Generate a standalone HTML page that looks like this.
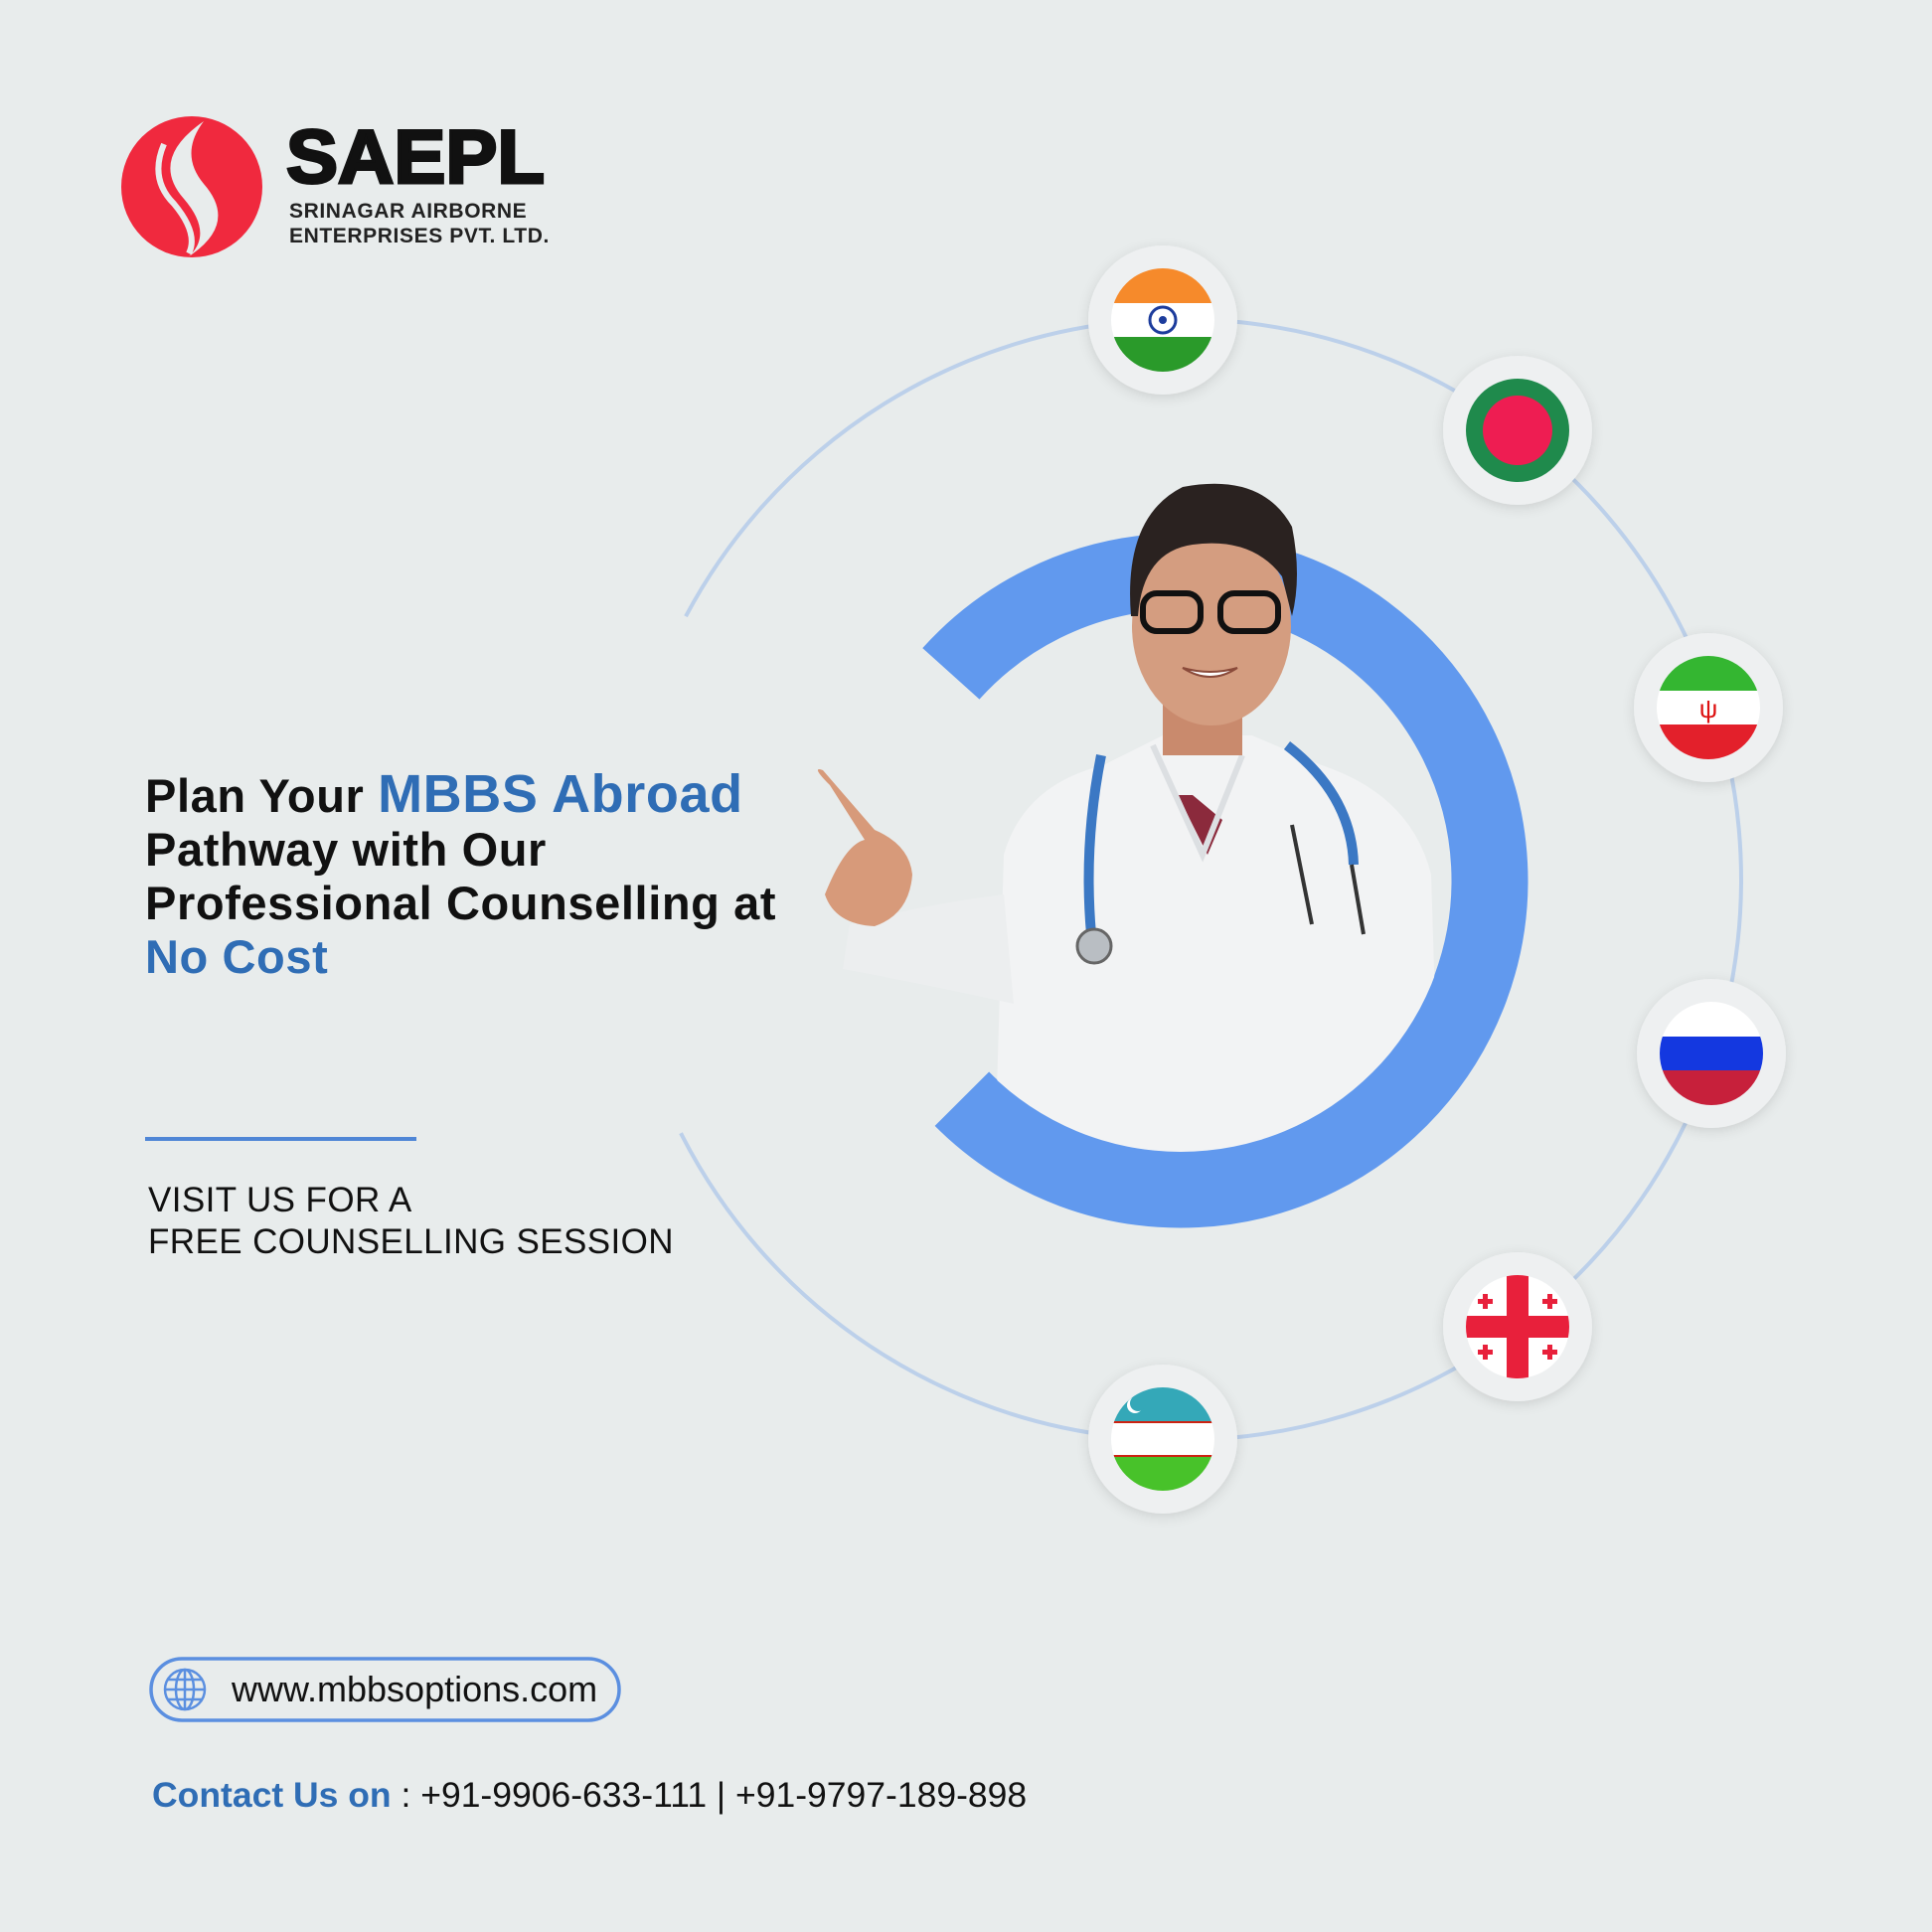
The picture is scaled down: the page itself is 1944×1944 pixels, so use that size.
<!DOCTYPE html>
<html><head><meta charset="utf-8"><style>
html,body{margin:0;padding:0}
body{width:1944px;height:1944px;overflow:hidden;background:#e8ecec;position:relative;font-family:"Liberation Sans",sans-serif}
.abs{position:absolute}
.h{left:146px;top:772px;font-size:47px;font-weight:bold;line-height:54px;color:#111;letter-spacing:0.6px}
.b{color:#2f6db5}
</style></head><body>
<svg class="abs" style="left:0;top:0" width="1944" height="1944" viewBox="0 0 1944 1944">
<defs>
<filter id="sh" x="-30%" y="-30%" width="160%" height="160%"><feDropShadow dx="0" dy="3" stdDeviation="6" flood-color="#000" flood-opacity="0.12"/></filter>
<clipPath id="body"><circle cx="1188" cy="886" r="273"/><rect x="1000" y="400" width="400" height="500"/></clipPath>
<clipPath id="f"><circle r="52"/></clipPath>
</defs>
<!-- thin orbit -->
<circle cx="1188" cy="885" r="564" fill="none" stroke="#bcd0ea" stroke-width="4" stroke-dasharray="3003 541" transform="rotate(-152 1188 885)"/>
<!-- big ring -->
<circle cx="1188" cy="886" r="311" fill="none" stroke="#6199ee" stroke-width="77" stroke-dasharray="1482 472" transform="rotate(-138 1188 886)"/>
<!-- person body -->
<g clip-path="url(#body)">
<path d="M1000 1200 L1010 860 Q1030 790 1110 770 L1170 740 L1260 740 L1330 770 Q1420 800 1440 880 L1450 1200 Z" fill="#f2f3f4"/>
<path d="M1185 800 L1200 800 L1230 825 L1215 860 Z" fill="#8b2a3c"/>
<path d="M1160 750 L1210 860 L1250 760" fill="none" stroke="#dcdfe2" stroke-width="6"/>
<path d="M1108 760 Q1090 850 1098 940 M1295 750 Q1360 800 1362 870" fill="none" stroke="#3b78c4" stroke-width="10"/>
<circle cx="1101" cy="952" r="17" fill="#b9bec3" stroke="#666" stroke-width="3"/>
<path d="M1300 830 L1320 930" stroke="#333" stroke-width="4"/>
<path d="M1360 870 L1372 940" stroke="#333" stroke-width="4"/>
</g>
<!-- arm -->
<path d="M1010 900 Q930 910 855 930 L848 975 Q930 990 1020 1010 Z" fill="#eceeef"/>
<path d="M830 900 Q850 850 870 845 L835 790 Q815 770 828 775 L880 835 Q915 850 918 880 Q915 920 880 932 Q840 930 830 900 Z" fill="#d79a7a"/>
<!-- head -->
<rect x="1170" y="690" width="80" height="70" fill="#c98a6d"/>
<ellipse cx="1219" cy="630" rx="80" ry="100" fill="#d49d80"/>
<path d="M1138 620 Q1130 520 1190 490 Q1270 475 1300 530 Q1310 580 1300 620 L1290 580 Q1260 540 1200 548 Q1150 555 1145 620 Z" fill="#2a2220"/>
<rect x="1150" y="597" width="58" height="38" rx="14" fill="none" stroke="#111" stroke-width="6"/>
<rect x="1228" y="597" width="58" height="38" rx="14" fill="none" stroke="#111" stroke-width="6"/>
<path d="M1190 672 Q1218 690 1245 672 Q1218 680 1190 672 Z" fill="#fff" stroke="#8a4a3a" stroke-width="2"/>
<!-- logo -->
<circle cx="193" cy="188" r="71" fill="#f0293e"/>
<path d="M205 122 Q150 160 185 200 Q215 235 190 258 Q240 225 205 185 Q180 155 205 122Z" fill="#e8ecec"/>
<path d="M165 145 Q150 180 175 205 Q200 235 190 255" fill="none" stroke="#e8ecec" stroke-width="6"/>
<text x="288" y="184" font-family="Liberation Sans" font-weight="bold" font-size="76" fill="#111" textLength="260" lengthAdjust="spacingAndGlyphs" stroke="#111" stroke-width="3">SAEPL</text>
<text x="291" y="219" font-family="Liberation Sans" font-weight="bold" font-size="21" fill="#222" letter-spacing="0.6">SRINAGAR AIRBORNE</text>
<text x="291" y="244" font-family="Liberation Sans" font-weight="bold" font-size="21" fill="#222" letter-spacing="0.6">ENTERPRISES PVT. LTD.</text>
<!-- flags -->
<g transform="translate(1170 322)"><circle r="75" fill="#eef0f1" filter="url(#sh)"/><g clip-path="url(#f)"><rect x="-52" y="-52" width="104" height="35" fill="#f68a2b"/><rect x="-52" y="-17" width="104" height="34" fill="#fff"/><rect x="-52" y="17" width="104" height="35" fill="#2a9a2a"/><circle r="13" fill="none" stroke="#1c3c9c" stroke-width="3"/><circle r="4" fill="#1c3c9c"/></g></g>
<g transform="translate(1527 433)"><circle r="75" fill="#eef0f1" filter="url(#sh)"/><circle r="52" fill="#1f8a4c"/><circle r="35" fill="#ee1d52"/></g>
<g transform="translate(1719 712)"><circle r="75" fill="#eef0f1" filter="url(#sh)"/><g clip-path="url(#f)"><rect x="-52" y="-52" width="104" height="35" fill="#34b631"/><rect x="-52" y="-17" width="104" height="34" fill="#fff"/><rect x="-52" y="17" width="104" height="35" fill="#e3202b"/><text x="0" y="10" font-size="26" fill="#d11" text-anchor="middle">ψ</text></g></g>
<g transform="translate(1722 1060)"><circle r="75" fill="#eef0f1" filter="url(#sh)"/><g clip-path="url(#f)"><rect x="-52" y="-52" width="104" height="35" fill="#fff"/><rect x="-52" y="-17" width="104" height="34" fill="#1438e0"/><rect x="-52" y="17" width="104" height="35" fill="#c7203b"/></g></g>
<g transform="translate(1527 1335)"><circle r="75" fill="#eef0f1" filter="url(#sh)"/><g clip-path="url(#f)"><rect x="-52" y="-52" width="104" height="104" fill="#fff"/><rect x="-11" y="-52" width="22" height="104" fill="#e8203b"/><rect x="-52" y="-11" width="104" height="22" fill="#e8203b"/><g fill="#e8203b"><rect x="-35" y="-33" width="5" height="15"/><rect x="-40" y="-28" width="15" height="5"/><rect x="30" y="-33" width="5" height="15"/><rect x="25" y="-28" width="15" height="5"/><rect x="-35" y="18" width="5" height="15"/><rect x="-40" y="23" width="15" height="5"/><rect x="30" y="18" width="5" height="15"/><rect x="25" y="23" width="15" height="5"/></g></g></g>
<g transform="translate(1170 1448)"><circle r="75" fill="#eef0f1" filter="url(#sh)"/><g clip-path="url(#f)"><rect x="-52" y="-52" width="104" height="35" fill="#34a8b8"/><rect x="-52" y="-17" width="104" height="34" fill="#fff"/><rect x="-52" y="17" width="104" height="35" fill="#48c22a"/><rect x="-52" y="-18" width="104" height="2" fill="#c21"/><rect x="-52" y="16" width="104" height="2" fill="#c21"/><circle cx="-28" cy="-34" r="8" fill="#fff"/><circle cx="-25" cy="-36" r="8" fill="#34a8b8"/></g></g>
<!-- lines -->
<rect x="146" y="1144" width="273" height="4" fill="#4f86d6"/>
<rect x="152" y="1669" width="471" height="62" rx="31" fill="none" stroke="#5b8fe0" stroke-width="3.5"/>
<g transform="translate(186 1700)" fill="none" stroke="#5b8fe0" stroke-width="2.5"><circle r="20"/><ellipse rx="9" ry="20"/><path d="M-20 0H20M-17 -10H17M-17 10H17M0 -20V20"/></g>
</svg>
<div class="abs h">Plan Your <span class="b" style="font-size:54px">MBBS Abroad</span><br>Pathway with Our<br>Professional Counselling at<br><span class="b">No Cost</span></div>
<div class="abs" style="left:149px;top:1187px;font-size:35px;line-height:42px;color:#111;letter-spacing:0.4px">VISIT US FOR A<br>FREE COUNSELLING SESSION</div>
<div class="abs" style="left:233px;top:1679px;font-size:36px;color:#111">www.mbbsoptions.com</div>
<div class="abs" style="left:153px;top:1786px;font-size:35.5px;color:#111"><b style="color:#2f6db5">Contact Us on</b> : +91-9906-633-111 | +91-9797-189-898</div>
</body></html>
